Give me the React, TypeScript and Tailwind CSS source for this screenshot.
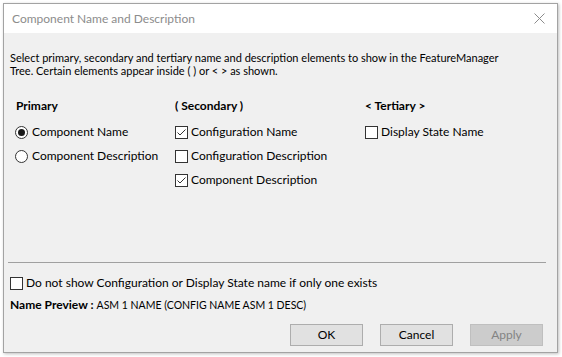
import { useState } from "react";

function CheckBox({ checked }: { checked: boolean }) {
  return (
    <svg width="13" height="13" viewBox="0 0 13 13" className="shrink-0">
      <rect x="0.5" y="0.5" width="12" height="12" fill="#fff" stroke="#333" />
      {checked && (
        <polyline points="2.5,6.5 5,9 10.5,3.5" fill="none" stroke="#333" strokeWidth="1" />
      )}
    </svg>
  );
}

function Radio({ checked }: { checked: boolean }) {
  return (
    <svg width="13" height="13" viewBox="0 0 13 13" className="shrink-0">
      <circle cx="6.5" cy="6.5" r="6" fill="#fff" stroke="#333" />
      {checked && <circle cx="6.5" cy="6.5" r="3.5" fill="#1a1a1a" />}
    </svg>
  );
}

function Option({
  label,
  checked,
  radio,
  onClick,
}: {
  label: string;
  checked: boolean;
  radio?: boolean;
  onClick?: () => void;
}) {
  return (
    <div
      className={`flex items-center h-[24px] cursor-default whitespace-nowrap ${radio ? "gap-[4px]" : "gap-[3px]"}`}
      onClick={onClick}
    >
      {radio ? <Radio checked={checked} /> : <CheckBox checked={checked} />}
      <span>{label}</span>
    </div>
  );
}

export default function App() {
  const [primary, setPrimary] = useState<"name" | "desc">("name");
  const [configName, setConfigName] = useState(true);
  const [configDesc, setConfigDesc] = useState(false);
  const [compDesc, setCompDesc] = useState(true);
  const [stateName, setStateName] = useState(false);
  const [hideSingle, setHideSingle] = useState(false);

  return (
    <div
      className="w-[562px] h-[357px] bg-white pt-[3px] pl-[3px] text-[12px] text-black leading-[14px]"
      style={{ fontFamily: "Lato, sans-serif" }}
    >
      <div className="w-[555px] h-[350px] border border-[#a3a3a3] bg-[#f0f0f0] flex flex-col shadow-[1px_1px_3px_rgba(0,0,0,0.25)]">
        <div className="h-[29px] bg-white flex items-center justify-between pl-[8px] pr-[12px] shrink-0">
          <span className="text-[#8c8c8c]">Component Name and Description</span>
          <svg width="11" height="11" viewBox="0 0 11 11">
            <path d="M0.5 0.5L10.5 10.5M10.5 0.5L0.5 10.5" stroke="#8c8c8c" strokeWidth="1" />
          </svg>
        </div>

        <div className="flex-1 flex flex-col px-[6px] pt-[18px]">
          <p className="text-[11px] leading-[13px] whitespace-nowrap">
            Select primary, secondary and tertiary name and description elements to show in the FeatureManager
            <br />
            Tree. Certain elements appear inside ( ) or &lt; &gt; as shown.
          </p>

          <div className="grid grid-cols-[165px_190px_1fr] mt-[22px]">
            <div className="flex flex-col">
              <div className="font-bold h-[14px] pl-[6px] mb-[7px]">Primary</div>
              <div className="pl-[5px]">
                <Option label="Component Name" radio checked={primary === "name"} onClick={() => setPrimary("name")} />
                <Option label="Component Description" radio checked={primary === "desc"} onClick={() => setPrimary("desc")} />
              </div>
            </div>
            <div className="flex flex-col">
              <div className="font-bold h-[14px] mb-[7px]">( Secondary )</div>
              <Option label="Configuration Name" checked={configName} onClick={() => setConfigName(!configName)} />
              <Option label="Configuration Description" checked={configDesc} onClick={() => setConfigDesc(!configDesc)} />
              <Option label="Component Description" checked={compDesc} onClick={() => setCompDesc(!compDesc)} />
            </div>
            <div className="flex flex-col">
              <div className="font-bold h-[14px] mb-[7px]">&lt; Tertiary &gt;</div>
              <Option label="Display State Name" checked={stateName} onClick={() => setStateName(!stateName)} />
            </div>
          </div>

          <div className="mt-auto border-t border-[#a0a0a0] mr-[5px] -ml-[2px]" />

          <div className="pt-[8px]">
            <Option
              label="Do not show Configuration or Display State name if only one exists"
              checked={hideSingle}
              onClick={() => setHideSingle(!hideSingle)}
            />
          </div>
          <div className="h-[20px] flex items-center">
            <span className="font-bold">Name Preview :</span>
            <span className="ml-[3px] text-[10.5px]">ASM 1 NAME (CONFIG NAME ASM 1 DESC)</span>
          </div>

          <div className="flex justify-end gap-[17px] pr-[8px] pt-[9px] pb-[6px]">
            <button className="w-[73px] h-[22px] bg-[#e1e1e1] border border-[#adadad]">OK</button>
            <button className="w-[73px] h-[22px] bg-[#e1e1e1] border border-[#adadad]">Cancel</button>
            <button disabled className="w-[73px] h-[22px] bg-[#cccccc] border border-[#bfbfbf] text-[#838383]">
              Apply
            </button>
          </div>
        </div>
      </div>
    </div>
  );
}
